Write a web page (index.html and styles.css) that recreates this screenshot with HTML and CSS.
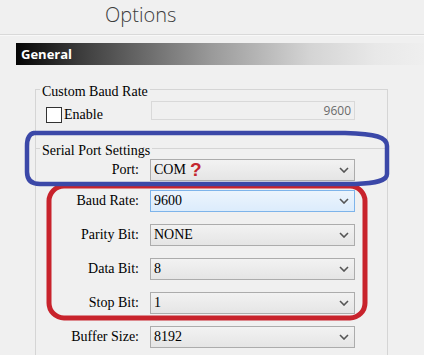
FILE: index.html
```html
<!DOCTYPE html>
<html lang="en">

<head>
    <meta charset="UTF-8">
    <title>Options</title>
    <link rel="stylesheet" href="styles.css">
</head>

<body>
    <div class="title">Options</div>
    <div class="section-bar">General</div>

    <div class="group baud-group">
        <div class="group-label">Custom Baud Rate</div>
        <div class="check-row">
            <label class="check"><span class="box"></span>Enable</label>
            <div class="field">9600</div>
        </div>
    </div>

    <div class="group port-group">
        <div class="group-label">Serial Port Settings</div>
        <div class="rows">
            <div class="row port-row">
                <span class="label">Port:</span>
                <div class="combo">COM<span class="mark">?</span>
                    <svg class="chev" width="10" height="6" viewBox="0 0 10 6"><path d="M1 1l4 4 4-4" /></svg>
                </div>
            </div>
            <div class="row">
                <span class="label">Baud Rate:</span>
                <div class="combo hover">9600
                    <svg class="chev" width="10" height="6" viewBox="0 0 10 6"><path d="M1 1l4 4 4-4" /></svg>
                </div>
            </div>
            <div class="row">
                <span class="label">Parity Bit:</span>
                <div class="combo">NONE
                    <svg class="chev" width="10" height="6" viewBox="0 0 10 6"><path d="M1 1l4 4 4-4" /></svg>
                </div>
            </div>
            <div class="row">
                <span class="label">Data Bit:</span>
                <div class="combo">8
                    <svg class="chev" width="10" height="6" viewBox="0 0 10 6"><path d="M1 1l4 4 4-4" /></svg>
                </div>
            </div>
            <div class="row">
                <span class="label">Stop Bit:</span>
                <div class="combo">1
                    <svg class="chev" width="10" height="6" viewBox="0 0 10 6"><path d="M1 1l4 4 4-4" /></svg>
                </div>
            </div>
            <div class="row">
                <span class="label">Buffer Size:</span>
                <div class="combo">8192
                    <svg class="chev" width="10" height="6" viewBox="0 0 10 6"><path d="M1 1l4 4 4-4" /></svg>
                </div>
            </div>
        </div>
    </div>

    <!-- hand-drawn annotation marks -->
    <svg class="marks" width="424" height="355" viewBox="0 0 424 355">
        <rect class="red" x="49" y="186" width="316" height="132" rx="15" />
        <path class="blue" d="M34 133 L345 133 C376 134 387 137 387 146 L387 174 C387 181 376 183 356 184 L40 184 C31 184 27 180 27 172 L27 146 C27 138 29 134 34 133 Z" />
    </svg>
</body>

</html>
```

FILE: styles.css
```css
body {
    margin: 0;
    width: 424px;
    height: 355px;
    overflow: hidden;
    position: relative;
    background-color: #f0f0f0;
    font-family: "Liberation Serif", "Times New Roman", serif;
    font-size: 14px;
    color: #000;
}

.title {
    height: 30px;
    line-height: 30px;
    padding-left: 105px;
    padding-bottom: 4px;
    border-bottom: 1px solid #d9d9d9;
    box-shadow: 0 1px 0 #f8f8f8;
    font-family: "Open Sans", sans-serif;
    font-weight: 300;
    font-size: 20px;
    color: #3c3c3c;
}

.section-bar {
    margin: 8px 0 0 16px;
    height: 22px;
    line-height: 22px;
    padding-left: 5px;
    background: linear-gradient(to right, #050505 0%, #3a3a3a 15%, #9a9a9a 48%, #d4d4d4 72%, #e8e8e8 88%, #efefef 100%);
    color: #fff;
    font-family: "Open Sans", sans-serif;
    font-weight: 700;
    font-size: 13px;
}

.group {
    margin-left: 35px;
    width: 351px;
    border: 1px solid #d5d5d5;
    border-bottom: none;
}

.baud-group {
    margin-top: 24px;
    height: 58px;
}

.port-group {
    height: 206px;
}

.group-label {
    width: max-content;
    margin: -6px 0 0 4px;
    padding: 0 2px;
    line-height: 16px;
    background-color: #f0f0f0;
}

.check-row {
    display: grid;
    grid-template-columns: 115px 204px;
    align-items: start;
}

.check {
    display: flex;
    align-items: center;
    gap: 2px;
    margin-top: 7px;
    padding-left: 10px;
    line-height: 16px;
}

.box {
    width: 14px;
    height: 14px;
    border: 1px solid #333;
    background-color: #fff;
}

.field {
    margin-top: 1px;
    height: 17px;
    line-height: 17px;
    border: 1px solid #d9d9d9;
    padding-right: 3px;
    text-align: right;
    font-family: "Open Sans", sans-serif;
    font-size: 12px;
    color: #6a6a6a;
}

.rows {
    display: flex;
    flex-direction: column;
    gap: 12px;
}

.port-row {
    margin-bottom: -3px;
}

.row {
    display: grid;
    grid-template-columns: 103px 205px;
    column-gap: 11px;
    align-items: center;
}

.label {
    text-align: right;
}

.combo {
    height: 20px;
    line-height: 20px;
    display: flex;
    align-items: center;
    padding-left: 3px;
    border: 1px solid #acacac;
    background: linear-gradient(#f2f2f2, #e5e5e5);
}

.combo.hover {
    border-color: #7eb4ea;
    background: linear-gradient(#ecf4fc, #dcecfc);
}

.mark {
    margin-left: 4px;
    font-family: "Liberation Sans", sans-serif;
    font-weight: 700;
    font-size: 19px;
    color: #c3262e;
}

.chev {
    margin-left: auto;
    margin-right: 5px;
}

.chev path {
    fill: none;
    stroke: #555;
    stroke-width: 1.6;
}

.marks {
    position: absolute;
    top: 0;
    left: 0;
    pointer-events: none;
}

.marks .red {
    fill: none;
    stroke: #c8232c;
    stroke-width: 5;
}

.marks .blue {
    fill: none;
    stroke: #3b48a8;
    stroke-width: 4.5;
}
```
